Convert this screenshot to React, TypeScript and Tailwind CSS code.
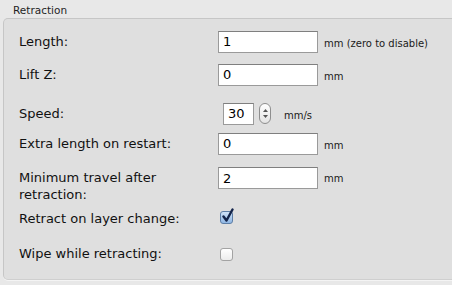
import React from 'react'

const font = { fontFamily: '"DejaVu Sans", "Noto Sans", sans-serif' }

function TextBox({ value, width = 'w-[100px]' }: { value: string; width?: string }) {
  return (
    <div
      className={`${width} h-[22px] bg-white border border-[#9a9a9a] border-t-[#7f7f7f] flex items-center pl-[4px] text-[13px] text-black leading-none`}
    >
      {value}
    </div>
  )
}

function Spinner() {
  return (
    <div className="w-[12px] h-[21px] rounded-[6px] border border-[#8e8e8e] bg-gradient-to-b from-white to-[#e4e4e4] flex flex-col items-center justify-center gap-[3px]">
      <svg width="5" height="3" viewBox="0 0 5 3">
        <path d="M0 3 L2.5 0 L5 3 Z" fill="#555" />
      </svg>
      <svg width="5" height="3" viewBox="0 0 5 3">
        <path d="M0 0 L2.5 3 L5 0 Z" fill="#555" />
      </svg>
    </div>
  )
}

function Checkbox({ checked }: { checked?: boolean }) {
  return (
    <div className="relative w-[13px] h-[13px]">
      <div
        className={
          checked
            ? 'w-[13px] h-[13px] rounded-[3px] border border-[#5d7ea6] bg-gradient-to-b from-[#cfe3f8] to-[#8fb6e3]'
            : 'w-[13px] h-[13px] rounded-[3px] border border-[#a3a3a3] bg-gradient-to-b from-white to-[#ececec]'
        }
      />
      {checked && (
        <svg className="absolute left-[1px] top-[-3px]" width="14" height="16" viewBox="0 0 14 16">
          <path d="M2.5 8.5 L5.5 12.5 L11.5 1.5" fill="none" stroke="#13244a" strokeWidth="2.4" strokeLinecap="round" strokeLinejoin="round" />
        </svg>
      )}
    </div>
  )
}

function Unit({ children }: { children: React.ReactNode }) {
  return <span className="text-[10px] text-[#1a1a1a]">{children}</span>
}

export default function App() {
  return (
    <div className="w-[452px] h-[285px] bg-[#e8e8e8] overflow-hidden text-[#111]" style={font}>
      <div className="h-[18px] pl-[13px] pt-[4px] text-[10.5px] leading-[13px] text-[#1f1f1f]">Retraction</div>
      <div className="ml-[3px] w-[470px] h-[262px] bg-[#dfdfdf] border border-[#c6c6c6] border-b-[#cfcfcf] rounded-[5px] pl-[15px] shadow-[0_1px_0_#f4f4f4]">
        <div className="flex items-center h-[23px] mt-[11px]">
          <div className="w-[199px] text-[13px]">Length:</div>
          <TextBox value="1" />
          <div className="ml-[6px]"><Unit>mm (zero to disable)</Unit></div>
        </div>
        <div className="flex items-center h-[23px] mt-[10px]">
          <div className="w-[199px] text-[13px]">Lift Z:</div>
          <TextBox value="0" />
          <div className="ml-[6px]"><Unit>mm</Unit></div>
        </div>
        <div className="flex items-center h-[23px] mt-[16px]">
          <div className="w-[204px] text-[13px]">Speed:</div>
          <TextBox value="30" width="w-[31px]" />
          <div className="ml-[5px]"><Spinner /></div>
          <div className="ml-[13px]"><Unit>mm/s</Unit></div>
        </div>
        <div className="flex items-center h-[23px] mt-[7px]">
          <div className="w-[199px] text-[13px]">Extra length on restart:</div>
          <TextBox value="0" />
          <div className="ml-[6px]"><Unit>mm</Unit></div>
        </div>
        <div className="flex items-start mt-[12px]">
          <div className="w-[199px] text-[13px] leading-[17px] pt-[2px]">
            Minimum travel after
            <br />
            retraction:
          </div>
          <TextBox value="2" />
          <div className="ml-[6px] h-[22px] flex items-center"><Unit>mm</Unit></div>
        </div>
        <div className="flex items-center h-[20px] mt-[4px]">
          <div className="w-[201px] text-[13px] pt-[4px]">Retract on layer change:</div>
          <Checkbox checked />
        </div>
        <div className="flex items-center h-[20px] mt-[17px]">
          <div className="w-[201px] text-[13px]">Wipe while retracting:</div>
          <Checkbox />
        </div>
      </div>
    </div>
  )
}
